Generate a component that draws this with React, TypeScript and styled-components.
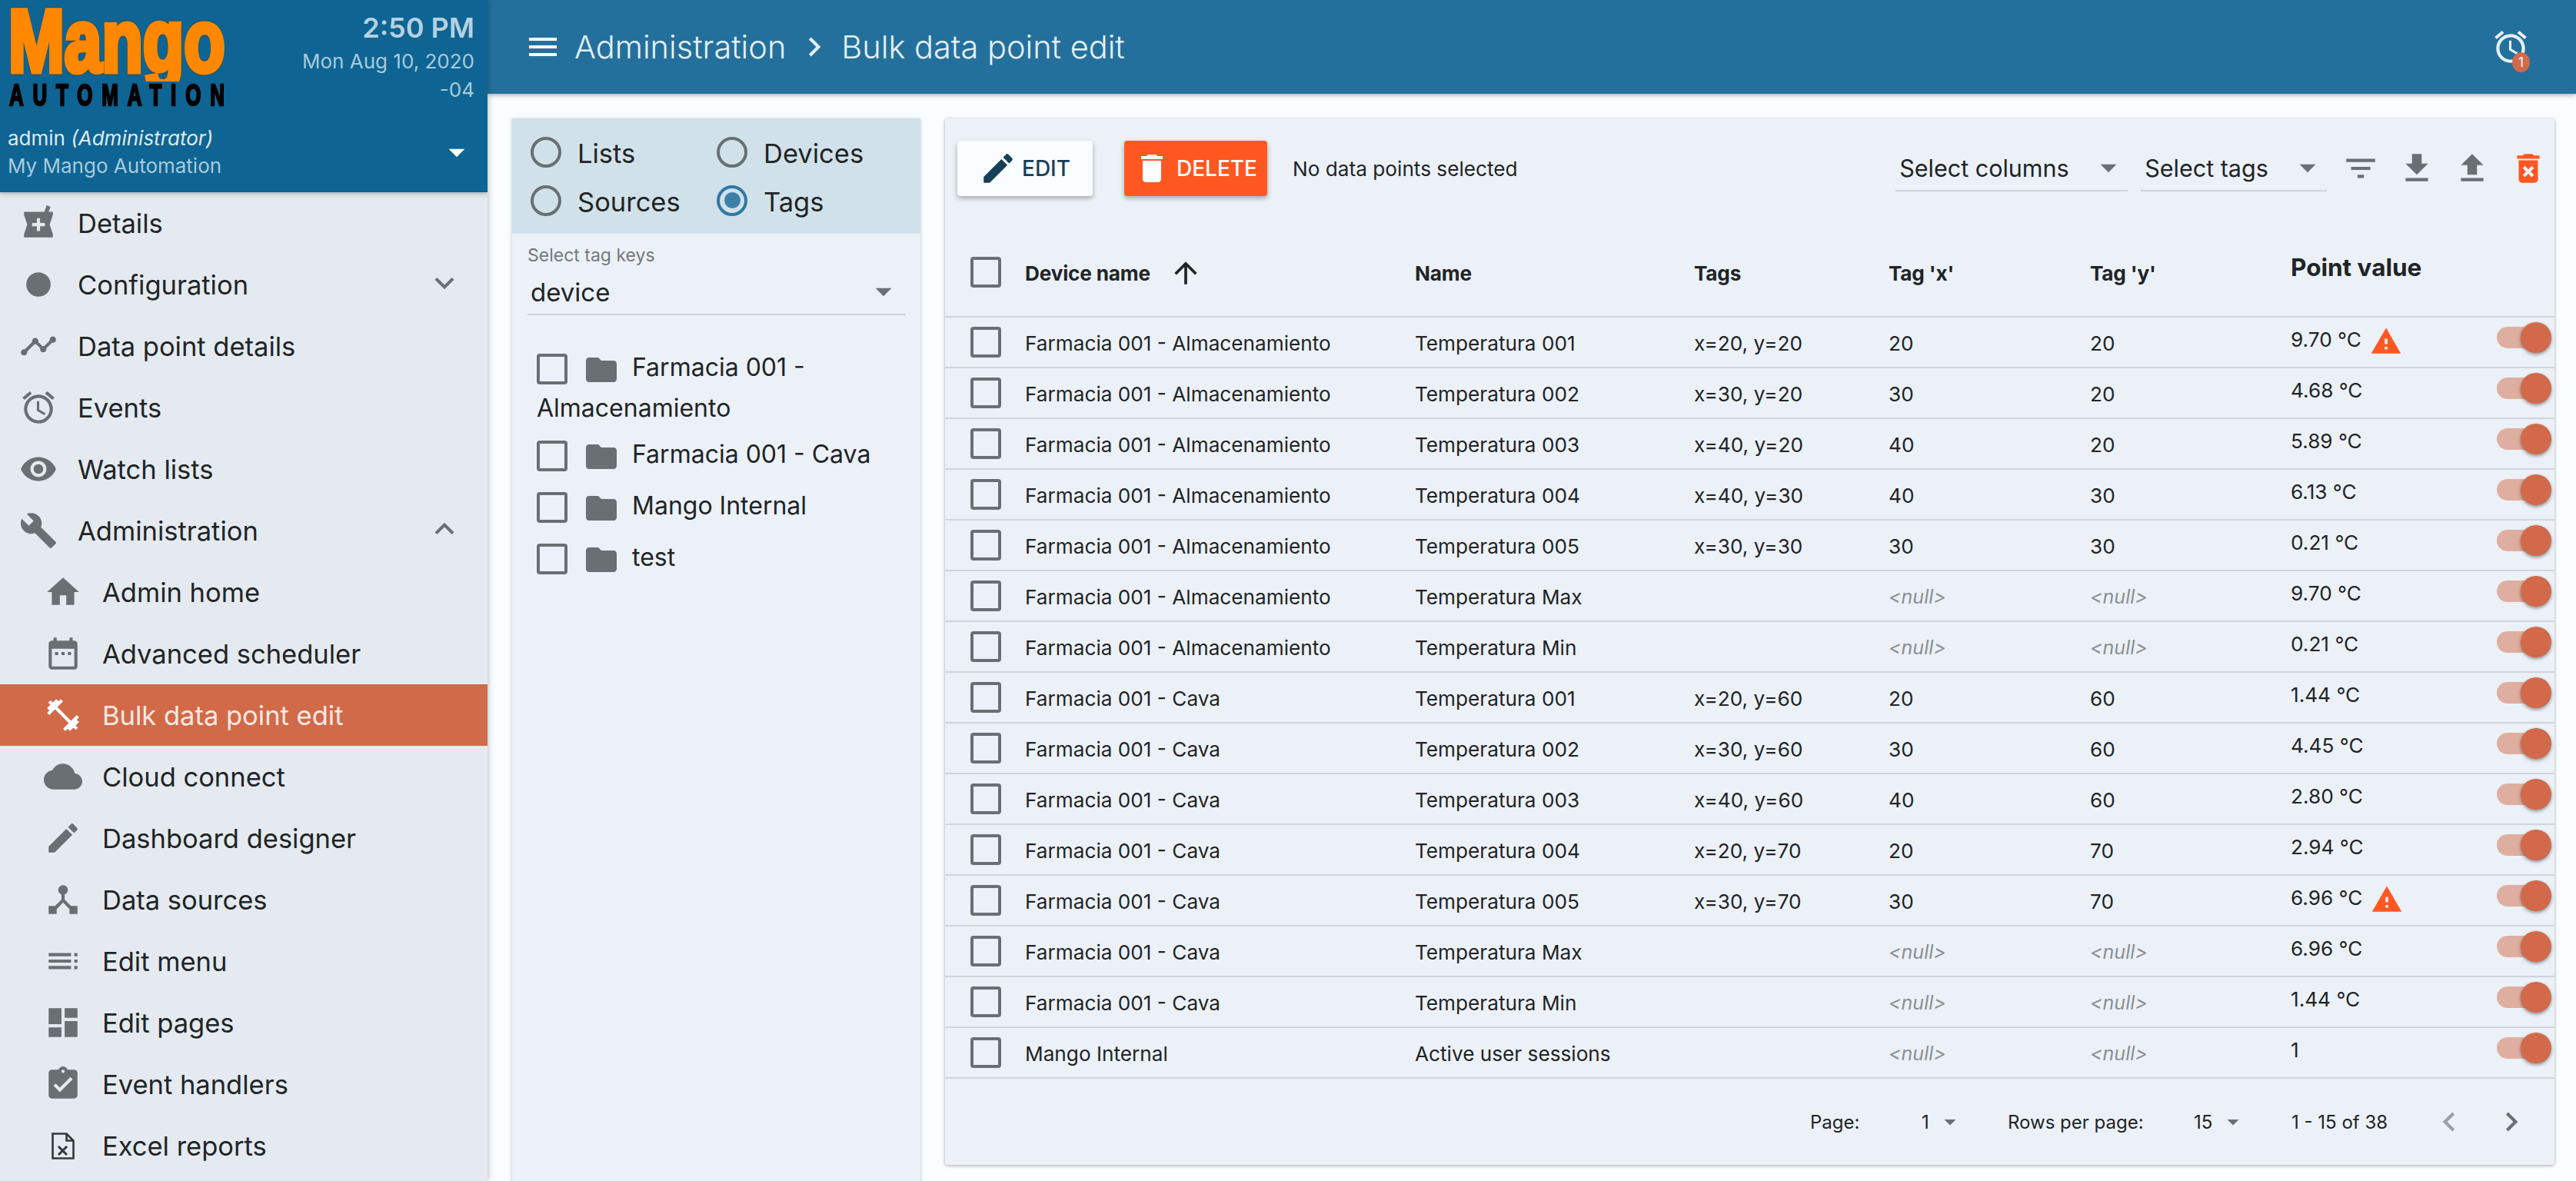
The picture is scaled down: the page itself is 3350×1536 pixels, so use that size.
import React from 'react'
import styled, { createGlobalStyle } from 'styled-components'
import {
   MdLocalPharmacy, MdBrightness1, MdTimeline, MdAccessAlarm, MdRemoveRedEye, MdBuild, MdHome,
   MdDateRange, MdFitnessCenter, MdCloud, MdCreate, MdDeviceHub, MdToc, MdDashboard,
   MdAssignmentTurnedIn, MdExpandMore, MdExpandLess, MdMenu, MdChevronRight, MdChevronLeft,
   MdEdit, MdDelete, MdFilterList, MdFileDownload, MdFileUpload, MdDeleteForever, MdWarning,
   MdArrowUpward, MdFolder, MdArrowDropDown,
} from 'react-icons/md'

const GlobalStyle = createGlobalStyle`
   html, body { margin: 0; padding: 0; background: #fafdff; }
   body { font-family: Inter, "Liberation Sans", sans-serif; color: #212426; }
   * { box-sizing: border-box; }
`

const ExcelIcon = () => (
   <svg width="30" height="35" viewBox="0 0 30 35" fill="none" stroke="#33383b" strokeWidth="2.6">
      <path d="M1.5 1.5h18l9 9v23h-27z" />
      <path d="M19.5 1.5v9h9" />
      <path d="M9 18l11 11M20 18L9 29" strokeWidth="3" />
   </svg>
)

const menu = [
   { label: 'Details', icon: <MdLocalPharmacy /> },
   { label: 'Configuration', icon: <MdBrightness1 />, small: true, chevron: 'down' },
   { label: 'Data point details', icon: <MdTimeline /> },
   { label: 'Events', icon: <MdAccessAlarm /> },
   { label: 'Watch lists', icon: <MdRemoveRedEye /> },
   { label: 'Administration', icon: <MdBuild />, chevron: 'up' },
   { label: 'Admin home', icon: <MdHome />, sub: true },
   { label: 'Advanced scheduler', icon: <MdDateRange />, sub: true },
   { label: 'Bulk data point edit', icon: <MdFitnessCenter />, sub: true, active: true },
   { label: 'Cloud connect', icon: <MdCloud />, sub: true },
   { label: 'Dashboard designer', icon: <MdCreate />, sub: true },
   { label: 'Data sources', icon: <MdDeviceHub />, sub: true },
   { label: 'Edit menu', icon: <MdToc />, sub: true },
   { label: 'Edit pages', icon: <MdDashboard />, sub: true },
   { label: 'Event handlers', icon: <MdAssignmentTurnedIn />, sub: true },
   { label: 'Excel reports', icon: <ExcelIcon />, sub: true },
]

const ALM = 'Farmacia 001 - Almacenamiento'
const CAVA = 'Farmacia 001 - Cava'

const rows = [
   [ALM, 'Temperatura 001', 'x=20, y=20', '20', '20', '9.70 °C', true],
   [ALM, 'Temperatura 002', 'x=30, y=20', '30', '20', '4.68 °C'],
   [ALM, 'Temperatura 003', 'x=40, y=20', '40', '20', '5.89 °C'],
   [ALM, 'Temperatura 004', 'x=40, y=30', '40', '30', '6.13 °C'],
   [ALM, 'Temperatura 005', 'x=30, y=30', '30', '30', '0.21 °C'],
   [ALM, 'Temperatura Max', '', null, null, '9.70 °C'],
   [ALM, 'Temperatura Min', '', null, null, '0.21 °C'],
   [CAVA, 'Temperatura 001', 'x=20, y=60', '20', '60', '1.44 °C'],
   [CAVA, 'Temperatura 002', 'x=30, y=60', '30', '60', '4.45 °C'],
   [CAVA, 'Temperatura 003', 'x=40, y=60', '40', '60', '2.80 °C'],
   [CAVA, 'Temperatura 004', 'x=20, y=70', '20', '70', '2.94 °C'],
   [CAVA, 'Temperatura 005', 'x=30, y=70', '30', '70', '6.96 °C', true],
   [CAVA, 'Temperatura Max', '', null, null, '6.96 °C'],
   [CAVA, 'Temperatura Min', '', null, null, '1.44 °C'],
   ['Mango Internal', 'Active user sessions', '', null, null, '1'],
] as (string | null | boolean)[][]

const App = () => {
   return (
      <Page>
         <GlobalStyle />
         <Sidebar>
            <SideHeader>
               <LogoRow>
                  <Logo>
                     <LogoMango>Mango</LogoMango>
                     <LogoAutomation>AUTOMATION</LogoAutomation>
                  </Logo>
                  <Clock>
                     <Time>2:50 PM</Time>
                     <DateText>Mon Aug 10, 2020</DateText>
                     <DateText>-04</DateText>
                  </Clock>
               </LogoRow>
               <UserRow>
                  <div>
                     <UserName>admin <em>(Administrator)</em></UserName>
                     <SiteName>My Mango Automation</SiteName>
                  </div>
                  <MdArrowDropDown />
               </UserRow>
            </SideHeader>
            <Menu>
               {menu.map((m) => (
                  <MenuItem key={m.label} $sub={m.sub} $active={m.active}>
                     <MenuIcon $small={m.small} $active={m.active}>{m.icon}</MenuIcon>
                     <MenuLabel>{m.label}</MenuLabel>
                     {m.chevron === 'down' && <MenuChevron><MdExpandMore /></MenuChevron>}
                     {m.chevron === 'up' && <MenuChevron><MdExpandLess /></MenuChevron>}
                  </MenuItem>
               ))}
            </Menu>
         </Sidebar>
         <Main>
            <TopBar>
               <MdMenu />
               <Crumb>Administration</Crumb>
               <CrumbSep><MdChevronRight /></CrumbSep>
               <Crumb>Bulk data point edit</Crumb>
               <Alarm>
                  <MdAccessAlarm />
                  <AlarmBadge>1</AlarmBadge>
               </Alarm>
            </TopBar>
            <Content>
               <LeftPanel>
                  <RadioPanel>
                     <RadioLabel><Radio /> Lists</RadioLabel>
                     <RadioLabel><Radio /> Devices</RadioLabel>
                     <RadioLabel><Radio /> Sources</RadioLabel>
                     <RadioLabel><Radio $checked /> Tags</RadioLabel>
                  </RadioPanel>
                  <TagField>
                     <TagLabel>Select tag keys</TagLabel>
                     <TagSelect>
                        device
                        <MdArrowDropDown />
                     </TagSelect>
                  </TagField>
                  <Tree>
                     <TreeItem $wrap>
                        <Checkbox $inline /><FolderIcon><MdFolder /></FolderIcon>Farmacia 001 - Almacenamiento
                     </TreeItem>
                     <TreeItem><Checkbox $inline /><FolderIcon><MdFolder /></FolderIcon>Farmacia 001 - Cava</TreeItem>
                     <TreeItem><Checkbox $inline /><FolderIcon><MdFolder /></FolderIcon>Mango Internal</TreeItem>
                     <TreeItem><Checkbox $inline /><FolderIcon><MdFolder /></FolderIcon>test</TreeItem>
                  </Tree>
               </LeftPanel>
               <Card>
                  <Toolbar>
                     <EditButton><MdEdit />EDIT</EditButton>
                     <DeleteButton><MdDelete />DELETE</DeleteButton>
                     <Selected>No data points selected</Selected>
                     <ToolSelect $width={302}>Select columns<MdArrowDropDown /></ToolSelect>
                     <ToolSelect $width={242}>Select tags<MdArrowDropDown /></ToolSelect>
                     <ToolIcons>
                        <MdFilterList />
                        <MdFileDownload />
                        <MdFileUpload />
                        <DangerIcon><MdDeleteForever /></DangerIcon>
                     </ToolIcons>
                  </Toolbar>
                  <HeadRow>
                     <CheckCell><Checkbox /></CheckCell>
                     <HeadCell>Device name<SortIcon><MdArrowUpward /></SortIcon></HeadCell>
                     <HeadCell>Name</HeadCell>
                     <HeadCell>Tags</HeadCell>
                     <HeadCell>Tag 'x'</HeadCell>
                     <HeadCell>Tag 'y'</HeadCell>
                     <ValueHead>Point value</ValueHead>
                     <span />
                  </HeadRow>
                  {rows.map((r, i) => (
                     <Row key={i}>
                        <CheckCell><Checkbox /></CheckCell>
                        <Cell>{r[0]}</Cell>
                        <Cell>{r[1]}</Cell>
                        <Cell>{r[2]}</Cell>
                        {r[3] ? <Cell>{r[3]}</Cell> : <NullCell>&lt;null&gt;</NullCell>}
                        {r[4] ? <Cell>{r[4]}</Cell> : <NullCell>&lt;null&gt;</NullCell>}
                        <ValueCell>{r[5]}{r[6] && <MdWarning />}</ValueCell>
                        <Toggle><ToggleThumb /></Toggle>
                     </Row>
                  ))}
                  <Footer>
                     <PageLabel>Page:</PageLabel>
                     <PagerSelect $width={78}>1<MdArrowDropDown /></PagerSelect>
                     <RowsLabel>Rows per page:</RowsLabel>
                     <PagerSelect $width={78}>15<MdArrowDropDown /></PagerSelect>
                     <Range>1 - 15 of 38</Range>
                     <PageArrow $disabled><MdChevronLeft /></PageArrow>
                     <PageArrow><MdChevronRight /></PageArrow>
                  </Footer>
               </Card>
            </Content>
         </Main>
      </Page>
   )
}

const Page = styled.div`
   display: flex;
   width: 3350px;
   height: 1536px;
   overflow: hidden;
   background: #fafdff;
`

const Sidebar = styled.aside`
   width: 634px;
   flex: none;
   height: 1536px;
   background: #e4eaf0;
   box-shadow: 0 0 8px rgba(0, 0, 0, 0.3);
   overflow: hidden;
   position: relative;
   z-index: 2;
`

const SideHeader = styled.header`
   height: 250px;
   background: #0e6493;
   padding: 3px 17px 0 10px;
   box-shadow: 0 2px 6px rgba(0, 0, 0, 0.25);
   position: relative;
`

const LogoRow = styled.div`
   display: flex;
   justify-content: space-between;
   height: 159px;
`

const Logo = styled.div`
   width: 290px;
   flex: none;
`

const LogoMango = styled.div`
   font-family: "Liberation Sans", sans-serif;
   font-weight: 700;
   font-size: 115px;
   line-height: 100px;
   color: #ff8800;
   -webkit-text-stroke: 7px #ff8800;
   filter: drop-shadow(0 0 1px #5a3000);
   transform: scaleX(0.76);
   transform-origin: left top;
   clip-path: inset(-20px -150px -3px -20px);
   white-space: nowrap;
   margin-left: 1px;
`

const LogoAutomation = styled.div`
   font-family: "Liberation Sans", sans-serif;
   font-weight: 700;
   font-size: 38px;
   line-height: 30px;
   margin-top: 6px;
   color: #000;
   -webkit-text-stroke: 2.5px #000;
   letter-spacing: 17.5px;
   white-space: nowrap;
   margin-left: 2px;
   transform: scaleX(0.68);
   transform-origin: left top;
`

const Clock = styled.div`
   text-align: right;
   padding-top: 13px;
   color: #a9cadb;
`

const Time = styled.div`
   font-size: 36px;
   font-weight: 600;
   line-height: 40px;
   color: #b6d1e0;
   margin-bottom: 5px;
`

const DateText = styled.div`
   font-size: 26px;
   line-height: 37px;
`

const UserRow = styled.div`
   display: flex;
   justify-content: space-between;
   align-items: center;
   color: #fff;
   svg {
      width: 50px;
      height: 50px;
      margin-right: -2px;
   }
`

const UserName = styled.div`
   font-size: 26px;
   line-height: 36px;
   color: #dfeaf1;
`

const SiteName = styled.div`
   font-size: 26px;
   line-height: 36px;
   color: #a9cadb;
`

const Menu = styled.nav`
   display: flex;
   flex-direction: column;
`

const MenuItem = styled.div<{ $sub?: boolean; $active?: boolean }>`
   display: flex;
   align-items: center;
   height: 80px;
   flex: none;
   padding-left: ${(p) => (p.$sub ? 57 : 25)}px;
   background: ${(p) => (p.$active ? '#d16a49' : 'transparent')};
   color: ${(p) => (p.$active ? '#fbe9e3' : '#212426')};
   font-size: 34.5px;
   position: relative;
`

const MenuIcon = styled.span<{ $small?: boolean; $active?: boolean }>`
   width: 50px;
   height: 50px;
   margin-right: 26px;
   display: flex;
   align-items: center;
   justify-content: center;
   color: ${(p) => (p.$active ? '#fff' : '#6a6f73')};
   svg:not([fill='none']) {
      width: ${(p) => (p.$small ? 38 : 50)}px;
      height: ${(p) => (p.$small ? 38 : 50)}px;
   }
`

const MenuLabel = styled.span`
   white-space: nowrap;
`

const MenuChevron = styled.span`
   position: absolute;
   left: 553px;
   top: 13px;
   color: #6a6f73;
   svg {
      width: 50px;
      height: 50px;
   }
`

const Main = styled.main`
   flex: 1;
   min-width: 0;
   display: flex;
   flex-direction: column;
`

const TopBar = styled.header`
   height: 122px;
   flex: none;
   background: #24709d;
   box-shadow: 0 2px 6px rgba(0, 0, 0, 0.3);
   color: #e6f0f5;
   display: flex;
   align-items: center;
   padding: 0 30px 0 48px;
   position: relative;
   z-index: 1;
   > svg {
      width: 48px;
      height: 48px;
      margin-right: 17px;
      color: #fff;
   }
`

const Crumb = styled.span`
   font-size: 41.5px;
   font-weight: 300;
`

const CrumbSep = styled.span`
   display: flex;
   margin: 0 10px 0 12px;
   svg {
      width: 50px;
      height: 50px;
   }
`

const Alarm = styled.div`
   margin-left: auto;
   position: relative;
   width: 50px;
   height: 50px;
   margin-right: 30px;
   svg {
      width: 50px;
      height: 50px;
   }
`

const AlarmBadge = styled.span`
   position: absolute;
   right: 0;
   bottom: -8px;
   width: 23px;
   height: 26px;
   border-radius: 50%;
   background: #d16a49;
   color: #fff;
   font-size: 17px;
   line-height: 26px;
   text-align: center;
`

const Content = styled.div`
   flex: 1;
   display: flex;
   align-items: flex-start;
   gap: 32px;
   padding: 32px 28px 0 32px;
`

const LeftPanel = styled.section`
   width: 531px;
   height: 1400px;
   flex: none;
   background: #ecf1f7;
   box-shadow: 0 1px 4px rgba(0, 0, 0, 0.25);
`

const RadioPanel = styled.div`
   height: 150px;
   background: #d1e1e9;
   display: grid;
   grid-template-columns: 242px 1fr;
   grid-auto-rows: 63px;
   padding: 12px 0 0 24px;
   align-items: center;
`

const RadioLabel = styled.label`
   display: flex;
   align-items: center;
   gap: 21px;
   padding-top: 4px;
   font-size: 34.5px;
`

const Radio = styled.span<{ $checked?: boolean }>`
   width: 40px;
   height: 40px;
   margin-top: -4px;
   border-radius: 50%;
   border: 4.5px solid ${(p) => (p.$checked ? '#2f78a3' : '#6a6f73')};
   display: flex;
   align-items: center;
   justify-content: center;
   &::after {
      content: '';
      width: 21px;
      height: 21px;
      border-radius: 50%;
      background: ${(p) => (p.$checked ? '#3d81a9' : 'transparent')};
   }
`

const TagField = styled.div`
   margin: 14px 19px 0 20px;
`

const TagLabel = styled.div`
   font-size: 23px;
   line-height: 28px;
   color: #73787c;
`

const TagSelect = styled.div`
   display: flex;
   align-items: center;
   justify-content: space-between;
   height: 64px;
   padding: 6px 4px 0;
   font-size: 33px;
   border-bottom: 2px solid #ced3d8;
   svg {
      width: 50px;
      height: 50px;
      color: #6a6f73;
      margin-top: -3px;
   }
`

const Tree = styled.div`
   padding: 41px 0 0 32px;
   width: 490px;
`

const TreeItem = styled.div<{ $wrap?: boolean }>`
   font-size: 32px;
   line-height: 53px;
   margin-bottom: ${(p) => (p.$wrap ? 7 : 14)}px;
`

const Checkbox = styled.span<{ $inline?: boolean }>`
   display: inline-block;
   width: 40px;
   height: 40px;
   border: 4.5px solid #6a6f73;
   border-radius: 4px;
   vertical-align: middle;
   margin-right: ${(p) => (p.$inline ? 24 : 0)}px;
`

const FolderIcon = styled.span`
   display: inline-block;
   vertical-align: middle;
   width: 40px;
   height: 40px;
   margin-right: 20px;
   color: #6a6f73;
   svg {
      display: block;
      width: 48px;
      height: 48px;
      margin: -3px 0 0 -4px;
   }
`

const Card = styled.section`
   width: 2093px;
   height: 1361px;
   flex: none;
   background: #ecf1f7;
   border-radius: 4px;
   box-shadow: 0 1px 4px rgba(0, 0, 0, 0.35);
`

const Toolbar = styled.div`
   height: 130px;
   margin-bottom: 13px;
   display: flex;
   align-items: center;
   padding-left: 16px;
`

const Button = styled.button`
   height: 72px;
   display: flex;
   align-items: center;
   border: none;
   border-radius: 4px;
   font-family: inherit;
   font-size: 28px;
   font-weight: 500;
   box-shadow: 0 3px 6px rgba(0, 0, 0, 0.3);
   padding: 0;
`

const EditButton = styled(Button)`
   width: 176px;
   background: #fafdff;
   color: #173f58;
   padding-left: 28px;
   gap: 6px;
   svg {
      width: 50px;
      height: 50px;
   }
`

const DeleteButton = styled(Button)`
   width: 186px;
   margin-left: 41px;
   background: #ff5722;
   color: #fff;
   padding-left: 12px;
   gap: 8px;
   svg {
      width: 48px;
      height: 48px;
   }
`

const Selected = styled.span`
   margin-left: 33px;
   font-size: 26.2px;
`

const ToolSelect = styled.div<{ $width: number }>`
   width: ${(p) => p.$width}px;
   height: 64px;
   margin: -5px 17px 0 0;
   padding: 5px 0 0 5px;
   border-bottom: 2px solid #ced3d8;
   display: flex;
   align-items: center;
   justify-content: space-between;
   font-size: 30.5px;
   color: #212426;
   &:first-of-type {
      margin-left: auto;
   }
   svg {
      width: 50px;
      height: 50px;
      color: #6a6f73;
   }
`

const ToolIcons = styled.div`
   display: flex;
   align-items: center;
   gap: 22.6px;
   margin: 0 9px 0 2px;
   color: #6a6f73;
   svg {
      display: block;
      width: 50px;
      height: 50px;
   }
`

const DangerIcon = styled.span`
   color: #ff5722;
`

const columns = '104px 507px 363px 253px 262px 261px 268px 75px'

const HeadRow = styled.div`
   display: grid;
   grid-template-columns: ${columns};
   align-items: center;
   height: 116px;
   border-bottom: 2px solid #cfd5da;
`

const Row = styled.div`
   display: grid;
   grid-template-columns: ${columns};
   align-items: center;
   height: 66px;
   border-bottom: 2px solid #cfd5da;
`

const CheckCell = styled.div`
   padding-left: 33px;
   display: flex;
`

const Cell = styled.div`
   font-size: 26.2px;
   white-space: nowrap;
   margin-top: 2px;
`

const HeadCell = styled(Cell)`
   font-weight: 700;
   letter-spacing: -0.2px;
   display: flex;
   align-items: center;
`

const SortIcon = styled.span`
   display: flex;
   margin-left: 24px;
   svg {
      width: 44px;
      height: 44px;
   }
`

const ValueHead = styled.div`
   font-size: 31.5px;
   font-weight: 700;
   margin-top: -13px;
`

const NullCell = styled(Cell)`
   color: #8a8f93;
   font-style: italic;
   font-size: 25px;
`

const ValueCell = styled(Cell)`
   display: flex;
   align-items: center;
   gap: 11px;
   margin-top: -7px;
   svg {
      width: 42px;
      height: 42px;
      color: #ff5722;
      margin-top: 5px;
   }
`

const Toggle = styled.div`
   position: relative;
   width: 60px;
   height: 28px;
   margin-top: -13px;
   border-radius: 14px;
   background: #deafa0;
`

const ToggleThumb = styled.span`
   position: absolute;
   left: 31px;
   top: -6px;
   width: 40px;
   height: 40px;
   border-radius: 50%;
   background: #d1694a;
   box-shadow: 0 2px 4px rgba(0, 0, 0, 0.4);
`

const Footer = styled.div`
   height: 112px;
   display: flex;
   align-items: center;
   font-size: 24px;
   padding-left: 1125px;
`

const PageLabel = styled.span`
   width: 145px;
`

const RowsLabel = styled.span`
   margin-left: 34px;
   width: 242px;
`

const PagerSelect = styled.span<{ $width: number }>`
   display: flex;
   align-items: center;
   width: ${(p) => p.$width}px;
   svg {
      width: 36px;
      height: 36px;
      color: #6a6f73;
      margin-left: 9px;
   }
`

const Range = styled.span`
   margin-left: 49px;
   width: 180px;
`

const PageArrow = styled.span<{ $disabled?: boolean }>`
   display: flex;
   width: 81px;
   color: ${(p) => (p.$disabled ? '#9aa0a4' : '#6a6f73')};
   svg {
      width: 50px;
      height: 50px;
   }
`

export default App
